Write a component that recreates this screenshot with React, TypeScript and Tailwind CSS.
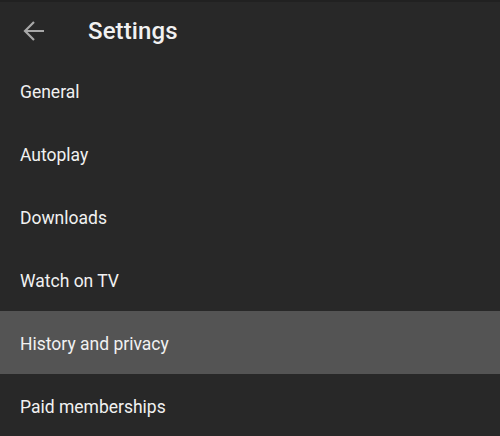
import React from 'react';

const items = ['General', 'Autoplay', 'Downloads', 'Watch on TV', 'History and privacy', 'Paid memberships'];

export default function App() {
  return (
    <div className="w-[500px] h-[436px] overflow-hidden bg-[#282828] border-t-2 border-[#212121] font-['Roboto',sans-serif]">
      <div className="h-[57px] flex items-center">
        <button className="w-[88px] h-full flex items-center pl-[23px] text-[#a8a8a8]">
          <svg width="22" height="22" viewBox="0 0 22 22" fill="none" stroke="currentColor" strokeWidth="2.2">
            <path d="M21 11H2.5M11 2L2 11l9 9" />
          </svg>
        </button>
        <h1 className="text-[24px] font-medium text-[#f1f1f1] tracking-[0.1px]">Settings</h1>
      </div>
      <ul>
        {items.map((item) => (
          <li
            key={item}
            className={
              item === 'History and privacy'
                ? 'h-[63px] flex items-center px-5 pt-[3px] text-[17.5px] text-[#f1f1f1] bg-[#545454]'
                : 'h-[63px] flex items-center px-5 pt-[3px] text-[17.5px] text-[#f1f1f1]'
            }
          >
            {item}
          </li>
        ))}
      </ul>
    </div>
  );
}
